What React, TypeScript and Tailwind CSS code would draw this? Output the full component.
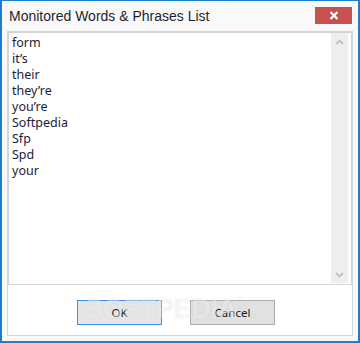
import React from "react";

const words = ["form", "it’s", "their", "they’re", "you’re", "Softpedia", "Sfp", "Spd", "your"];

function Chevron({ down }: { down?: boolean }) {
  return (
    <svg width="9" height="6" viewBox="0 0 9 6" className="block">
      <path
        d={down ? "M1 1 L4.5 4.5 L8 1" : "M1 5 L4.5 1.5 L8 5"}
        fill="none"
        stroke="#c2c2c2"
        strokeWidth="1.8"
      />
    </svg>
  );
}

export default function App() {
  return (
    <div className="w-[360px] h-[343px] bg-[#f9f9f9] border-t border-x-2 border-b-2 border-[#1a7fd0] flex flex-col font-['Noto_Sans',sans-serif] overflow-hidden">
      <div className="h-[30px] flex items-start justify-between pl-[7px] pr-[6px] shrink-0">
        <div className="mt-[6px] text-[14px] leading-[18px] text-[#1f1f2f] font-['Liberation_Sans',sans-serif]">Monitored Words &amp; Phrases List</div>
        <div className="mt-[6px] w-[37px] h-[17px] bg-[#c75050] flex items-center justify-center">
          <svg width="10" height="9" viewBox="0 0 10 9">
            <path d="M1.5 1 L8.5 8 M8.5 1 L1.5 8" stroke="#ffffff" strokeWidth="2.2" />
          </svg>
        </div>
      </div>
      <div className="mx-[5px] mb-[5px] flex-1 border border-[#d4d4d4] bg-white flex flex-col relative">
        <div className="h-[253px] border border-[#d4d4d4] flex shrink-0">
          <div className="flex-1 pl-[3px] pt-[2px] text-[12.5px] leading-[16px] text-[#241a38]">
            {words.map((w) => (
              <div key={w}>{w}</div>
            ))}
          </div>
          <div className="w-[17px] mr-[3px] mb-[1px] bg-[#eeeeee] flex flex-col justify-between">
            <div className="h-[17px] flex items-center justify-center"><Chevron /></div>
            <div className="h-[17px] flex items-center justify-center"><Chevron down /></div>
          </div>
        </div>
        <div className="flex-1 flex items-start pt-[15px] pl-[69px] gap-[28px] text-[11.5px] text-[#1a1a1a]">
          <div className="w-[85px] h-[25px] border border-[#3c8fe6] bg-[#e6e6e6] flex items-center justify-center">OK</div>
          <div className="w-[85px] h-[25px] border border-[#adadad] bg-[#e1e1e1] flex items-center justify-center">Cancel</div>
        </div>
        <div className="absolute left-[77px] top-[264px] flex items-start pointer-events-none select-none">
          <span className="text-[27px] leading-[27px] font-bold tracking-[-0.3px] text-white/45 [text-shadow:0_0_2px_rgba(0,0,0,0.08)] font-['Liberation_Sans',sans-serif]">SOFTPEDIA</span>
          <span className="text-[8px] leading-[8px] text-white/45 [text-shadow:0_0_1px_rgba(0,0,0,0.1)] font-['Liberation_Sans',sans-serif]">®</span>
        </div>
      </div>
    </div>
  );
}
